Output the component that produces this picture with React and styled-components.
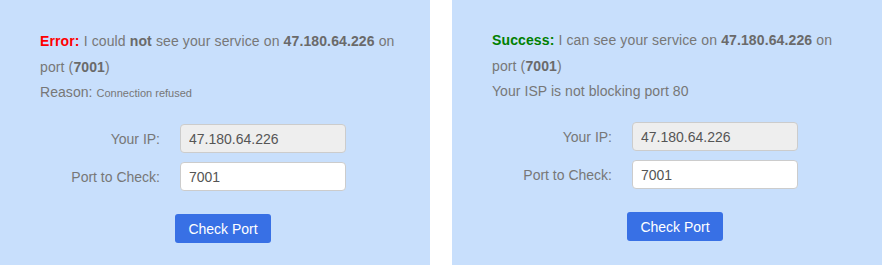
import React from "react";
import styled, { createGlobalStyle } from "styled-components";

const GlobalStyle = createGlobalStyle`
  html, body {
    margin: 0;
    padding: 0;
    background: #ffffff;
  }
  body {
    font-family: "Liberation Sans", Arial, sans-serif;
  }
`;

const Page = styled.div`
  display: flex;
  justify-content: space-between;
  width: 882px;
  height: 265px;
  background: #ffffff;
`;

const Panel = styled.div`
  width: 430px;
  height: 265px;
  box-sizing: border-box;
  padding: ${(p) => (p.$shift ? "27px" : "28px")} 30px 0 40px;
  background: #c8dffc;
  color: #777777;
  font-size: 14px;
`;

const Message = styled.div`
  line-height: 26px;
  letter-spacing: 0.12px;
`;

const Note = styled.div`
  line-height: 24px;
  margin-bottom: 19px;
  letter-spacing: 0.06px;
`;

const Small = styled.span`
  font-size: 11px;
  letter-spacing: 0;
`;

const Strong = styled.b`
  color: #6a6a6a;
  font-weight: bold;
`;

const Status = styled.b`
  color: ${(p) => (p.$ok ? "#008000" : "#ff0000")};
  font-weight: bold;
`;

const Form = styled.div`
  display: grid;
  grid-template-columns: 120px 166px;
  column-gap: 20px;
  row-gap: 9px;
  align-items: center;
`;

const Label = styled.label`
  text-align: right;
  color: #777777;
`;

const Field = styled.input`
  box-sizing: border-box;
  width: 166px;
  height: 29px;
  padding: 0 8px;
  border: 1px solid #cccccc;
  border-radius: 4px;
  background: ${(p) => (p.readOnly ? "#eeeeee" : "#ffffff")};
  color: #555555;
  font-family: "Liberation Sans", Arial, sans-serif;
  font-size: 14px;
  outline: none;
`;

const ButtonRow = styled.div`
  padding: 23px 0 0 135px;
`;

const Button = styled.button`
  width: 96px;
  height: 29px;
  border: none;
  border-radius: 3px;
  background: #3870e5;
  color: #ffffff;
  font-family: "Liberation Sans", Arial, sans-serif;
  font-size: 14px;
  cursor: pointer;
`;

const ip = "47.180.64.226";
const port = "7001";

const CheckForm = () => (
  <>
    <Form>
      <Label>Your IP:</Label>
      <Field readOnly value={ip} />
      <Label>Port to Check:</Label>
      <Field defaultValue={port} />
    </Form>
    <ButtonRow>
      <Button>Check Port</Button>
    </ButtonRow>
  </>
);

export default function App() {
  return (
    <Page>
      <GlobalStyle />
      <Panel>
        <Message>
          <Status>Error:</Status> I could <Strong>not</Strong> see your service
          on <Strong>{ip}</Strong> on port (<Strong>{port}</Strong>)
        </Message>
        <Note>
          Reason: <Small>Connection refused</Small>
        </Note>
        <CheckForm />
      </Panel>
      <Panel $shift>
        <Message>
          <Status $ok>Success:</Status> I can see your service on{" "}
          <Strong>{ip}</Strong> on port (<Strong>{port}</Strong>)
        </Message>
        <Note>Your ISP is not blocking port 80</Note>
        <CheckForm />
      </Panel>
    </Page>
  );
}
